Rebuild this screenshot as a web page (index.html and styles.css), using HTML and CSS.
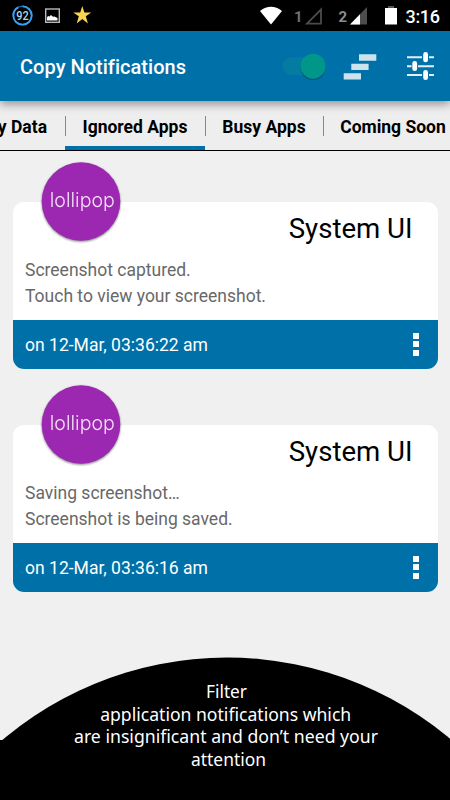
FILE: index.html
```
<!DOCTYPE html>
<html lang="en">
<head>
<meta charset="utf-8">
<title>Copy Notifications</title>
<link rel="stylesheet" href="styles.css">
</head>
<body>
<div class="screen">
  <header class="status">
    <svg class="status-left" width="110" height="31" viewBox="0 0 110 31">
      <circle cx="22.5" cy="15.5" r="9.2" fill="none" stroke="#1d6094" stroke-width="1.6"/>
      <circle cx="22.5" cy="15.5" r="9.2" fill="none" stroke="#35a4f5" stroke-width="1.8" stroke-dasharray="53 5" transform="rotate(-90 22.5 15.5)"/>
      <text class="battery-level" x="22.5" y="19.6" text-anchor="middle" textLength="12.5" lengthAdjust="spacingAndGlyphs">92</text>
      <rect x="45.7" y="9" width="13.6" height="13.3" fill="none" stroke="#b9b9b9" stroke-width="1.4"/>
      <path d="M47 20.5v-3l1-1.500 1.500.5 1.500-1.500 2 1.800 1.500-.3 3 1.500v2.500z" fill="#fff"/>
      <path d="M82.3 6l2.1 6.4h6.8l-5.4 3.9 2.1 7.200-5.600-4.400-5.600 4.400 2.100-7.200-5.500-3.900h6.900z" fill="#fbd44f"/>
    </svg>
    <svg class="status-right" width="190" height="31" viewBox="255 0 190 31">
      <path d="M260 11Q271 2.600 282 11L271 24.500z" fill="#fff"/>
      <text class="sim sim-off" x="294" y="22">1</text>
      <path d="M307 23.700H321V9.500z" fill="none" stroke="#4c4c4c" stroke-width="1.800"/>
      <text class="sim" x="338.500" y="22">2</text>
      <path d="M350 24.500H367V7z" fill="#4d4d4d"/>
      <path d="M350 24.500H360V14.200z" fill="#fff"/>
      <path d="M388 6h6v2h-6z" fill="#555"/><path d="M385 8h12v16.500h-12z" fill="#fff"/>
      <text class="clock" x="405.500" y="22.500" textLength="34.500">3:16</text>
    </svg>
  </header>
  <div class="appbar">
    <h1 class="title">Copy Notifications</h1>
    <svg class="actions" width="160" height="50" viewBox="280 41 160 50">
      <rect x="282.500" y="57.300" width="40" height="17.700" rx="8.850" fill="#047ca2"/>
      <circle cx="313" cy="67.500" r="12.700" fill="#003f60" opacity=".45"/>
      <circle cx="313" cy="66.200" r="12.500" fill="#009688"/>
      <path d="M359 54.300h17.300v6.400H359zM351.300 63.800h17.300v6.200h-17.300zM343.700 73.200H361v6.300h-17.300z" fill="#cce3ee"/>
      <path d="M407 57.300h15M429 57.300h5M407 66.300h4.500M418 66.300h16M407 74.900h15M429 74.900h5" stroke="#e1eff6" stroke-width="2"/>
      <path d="M425.600 54.500v5.400M414.700 63.300v5.400M425.600 72.300v5.400" stroke="#fff" stroke-width="4.800" stroke-linecap="round"/>
    </svg>
  </div>
  <nav class="tabs">
    <span class="tab tab-data">y Data</span>
    <span class="tab tab-ignored">Ignored Apps</span>
    <span class="tab tab-busy">Busy Apps</span>
    <span class="tab tab-soon">Coming Soon</span>
  </nav>
  <main class="list">
    <article class="card">
      <svg class="badge" width="86" height="86" viewBox="0 0 86 86">
        <circle cx="43" cy="42.500" r="39.300" fill="#9c27b0"/>
        <text class="brand" x="44.300" y="48" text-anchor="middle" textLength="65" lengthAdjust="spacingAndGlyphs">lollipop</text>
      </svg>
      <h2 class="app">System UI</h2>
      <p class="message">Screenshot captured.<br>Touch to view your screenshot.</p>
      <footer class="card-foot"><span class="date">on 12-Mar, 03:36:22 am</span><span class="more"><i></i><i></i><i></i></span></footer>
    </article>
    <article class="card">
      <svg class="badge" width="86" height="86" viewBox="0 0 86 86">
        <circle cx="43" cy="42.500" r="39.300" fill="#9c27b0"/>
        <text class="brand" x="44.300" y="48" text-anchor="middle" textLength="65" lengthAdjust="spacingAndGlyphs">lollipop</text>
      </svg>
      <h2 class="app">System UI</h2>
      <p class="message">Saving screenshot…<br>Screenshot is being saved.</p>
      <footer class="card-foot"><span class="date">on 12-Mar, 03:36:16 am</span><span class="more"><i></i><i></i><i></i></span></footer>
    </article>
  </main>
  <svg class="caption" width="450" height="150" viewBox="0 650 450 150">
    <circle cx="227" cy="1004.500" r="347"/>
    <path d="M0 740h450v60H0z"/>
    <g class="caption-text" text-anchor="middle">
      <text x="226.500" y="698" textLength="41" lengthAdjust="spacingAndGlyphs">Filter</text>
      <text x="225.700" y="720.500" textLength="251" lengthAdjust="spacingAndGlyphs">application notifications which</text>
      <text x="226" y="743" textLength="304" lengthAdjust="spacingAndGlyphs">are insignificant and don’t need your</text>
      <text x="228.500" y="765.500" textLength="75" lengthAdjust="spacingAndGlyphs">attention</text>
    </g>
  </svg>
</div>
</body>
</html>
```
FILE: styles.css
```
* { box-sizing: border-box; }
body { margin: 0; font-family: Roboto, "Liberation Sans", sans-serif; }
.screen { width: 450px; height: 800px; display: flex; flex-direction: column; background: #f0f0f0; overflow: hidden; }
.status { height: 31px; flex: none; background: #000; display: flex; justify-content: space-between; padding-right: 5px; }
.battery-level { font-size: 12px; font-weight: 500; fill: #a5d5f8; }
.sim { font-size: 15px; font-weight: 700; fill: #8c8c8c; }
.sim-off { fill: #707070; }
.clock { font-size: 18px; font-weight: 500; fill: #fff; }
.appbar { height: 70px; flex: none; background: #0070a9; display: flex; align-items: center; justify-content: space-between; padding: 0 10px 0 20px; box-shadow: 0 3px 9px rgba(0,0,0,.4); position: relative; z-index: 1; }
.title { margin: 2px 0 0; font-size: 20px; font-weight: 500; color: #fff; letter-spacing: .03px; white-space: nowrap; }
.tabs { height: 50px; flex: none; background: #eee; border-bottom: 1px solid #000; display: flex; }
.tab { position: relative; flex: none; height: 50px; line-height: 52px; font-size: 17.500px; font-weight: 700; text-align: center; white-space: nowrap; color: #000; }
.tab:not(:last-child)::after { content: ""; position: absolute; right: -1px; top: 15px; width: 1px; height: 20px; background: #888; }
.tab-data { width: 65px; display: flex; justify-content: flex-end; padding-right: 18px; }
.tab-ignored { width: 140px; height: 49px; border-bottom: 4px solid #0070a9; }
.tab-busy { width: 118px; }
.tab-soon { width: 140px; }
.list { flex: none; padding: 51px 12.500px 0; display: grid; gap: 56px; }
.card { position: relative; height: 167px; border-radius: 11px; background: #fff; display: flex; flex-direction: column; }
.badge { position: absolute; left: 25.500px; top: -43px; filter: drop-shadow(0 1px 1px rgba(0,0,0,.5)); }
.brand { font-family: Inter, sans-serif; font-weight: 300; font-size: 19.500px; fill: #f3e2f6; }
.app { margin: 9px 25px 0 0; height: 35px; line-height: 35px; text-align: right; font-size: 27.600px; font-weight: 400; color: #000; }
.message { margin: 11px 0 0 12.500px; line-height: 26px; font-size: 17.500px; color: #686868; }
.card-foot { margin-top: auto; height: 49.500px; background: #0070a9; border-radius: 0 0 11px 11px; display: flex; align-items: center; justify-content: space-between; padding: 0 18.500px 0 12.500px; color: #fff; font-size: 17.550px; }
.date { padding-top: 1.500px; }
.more { display: grid; gap: 2.500px; }
.more i { width: 6px; height: 6px; background: #fff; }
.caption { margin-top: auto; flex: none; }
.caption-text { fill: #fff; font-family: "Noto Sans", "Open Sans", sans-serif; font-size: 18px; line-height: 1; }
```
